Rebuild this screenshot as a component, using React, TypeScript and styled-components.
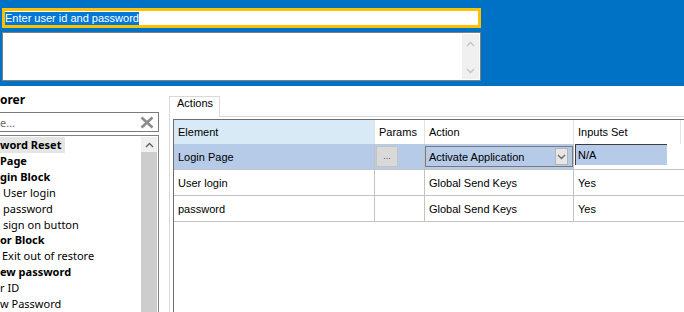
import React from 'react';
import styled, { createGlobalStyle } from 'styled-components';

//
// -- Global

const GlobalStyle = createGlobalStyle`
  html, body {
    margin: 0;
    padding: 0;
    background: #ffffff;
    overflow: hidden;
  }
  #root {
    width: 684px;
    height: 312px;
  }
`;

const GRID_FONT = `'Liberation Sans', Arial, sans-serif`;
const TREE_FONT = `'Noto Sans', 'Open Sans', sans-serif`;
const ROW_SELECTED = '#b5cbe7';

//
// -- Styled Components

const Window = styled.div`
  width: 684px;
  height: 312px;
  display: flex;
  flex-direction: column;
  overflow: hidden;
`;

const Banner = styled.div`
  height: 86px;
  flex-shrink: 0;
  box-sizing: border-box;
  background: #0072c6;
  padding: 8px 0 0 2px;
  display: flex;
  flex-direction: column;
  gap: 4px;
`;

const PromptBox = styled.div`
  width: 479px;
  height: 20px;
  box-sizing: border-box;
  border: 3px solid #ffc000;
  background: #ffffff;
  display: flex;
  align-items: center;
  font: 11px ${GRID_FONT};
`;

const SelectedText = styled.span`
  background: #0078d7;
  color: #ffffff;
  line-height: 13px;
`;

const NotesBox = styled.div`
  width: 479px;
  height: 49px;
  box-sizing: border-box;
  border: 1px solid #7f7f7f;
  background: #ffffff;
  padding: 1px;
  display: flex;
  justify-content: flex-end;
`;

const NotesScroll = styled.div`
  width: 17px;
  background: #f0f0f0;
  display: flex;
  flex-direction: column;
  justify-content: space-between;
  align-items: center;
  padding: 7px 0 5px;
  box-sizing: border-box;
`;

const Body = styled.div`
  flex: 1;
  display: flex;
  min-height: 0;
`;

const LeftPane = styled.div`
  width: 159px;
  flex-shrink: 0;
  display: flex;
  flex-direction: column;
`;

const PaneTitle = styled.div`
  height: 26px;
  display: flex;
  align-items: center;
  font: 700 12px ${TREE_FONT};
  color: #000000;
`;

const SearchBox = styled.div`
  height: 20px;
  box-sizing: border-box;
  border: 1px solid #7a7a7a;
  border-left: none;
  display: flex;
  align-items: center;
  justify-content: space-between;
  padding-right: 4px;
  font: 11px ${TREE_FONT};
  color: #6d6d6d;
`;

const TreeBox = styled.div`
  flex: 1;
  margin-top: 3px;
  border: 1px solid #828282;
  border-left: none;
  border-bottom: none;
  padding-right: 1px;
  display: flex;
  min-height: 0;
`;

const TreeList = styled.div`
  flex: 1;
  padding-top: 1px;
  display: flex;
  flex-direction: column;
`;

const TreeRow = styled.div<{ $bold?: boolean; $indent?: number; $selected?: boolean }>`
  height: 16px;
  line-height: 16px;
  width: fit-content;
  padding: 0 4px 0 ${(p) => p.$indent || 0}px;
  font: ${(p) => (p.$bold ? 700 : 400)} 11px ${TREE_FONT};
  color: #000000;
  white-space: nowrap;
  background: ${(p) => (p.$selected ? '#e5e5e5' : 'transparent')};
`;

const TreeScroll = styled.div`
  width: 16px;
  margin-top: 1px;
  display: flex;
  flex-direction: column;
`;

const ScrollArrow = styled.div`
  height: 15px;
  background: #f0f0f0;
  display: flex;
  align-items: center;
  justify-content: center;
`;

const ScrollThumb = styled.div`
  flex: 1;
  background: #cdcdcd;
`;

const RightPane = styled.div`
  flex: 1;
  padding: 10px 0 0 10px;
  display: flex;
  flex-direction: column;
  min-width: 0;
`;

const TabStrip = styled.div`
  display: flex;
`;

const Tab = styled.div`
  position: relative;
  z-index: 1;
  width: 51px;
  height: 21px;
  box-sizing: border-box;
  margin-bottom: -1px;
  border: 1px solid #d9d9d9;
  border-bottom: none;
  background: #ffffff;
  padding-left: 7px;
  line-height: 19px;
  font: 11px ${GRID_FONT};
`;

const TabPage = styled.div`
  flex: 1;
  border-top: 1px solid #d9d9d9;
  border-left: 1px solid #d9d9d9;
  padding: 2px 0 0 3px;
  display: flex;
  flex-direction: column;
`;

const Grid = styled.div`
  flex: 1;
  border-top: 1px solid #6d6d6d;
  border-left: 1px solid #6d6d6d;
  background: #ffffff;
  font: 11px ${GRID_FONT};
  color: #000000;
`;

const GridRow = styled.div<{ $header?: boolean }>`
  display: grid;
  grid-template-columns: 201px 50px 149px 107px 1fr;
  height: ${(p) => (p.$header ? '24px' : '26px')};
  box-sizing: border-box;
  border-bottom: ${(p) => (p.$header ? 'none' : '1px solid #c3c3c3')};
`;

const Cell = styled.div<{ $header?: boolean; $bg?: string; $open?: boolean }>`
  display: flex;
  align-items: center;
  box-sizing: border-box;
  padding-left: 4px;
  white-space: nowrap;
  overflow: hidden;
  background: ${(p) => p.$bg || 'transparent'};
  border-right: ${(p) =>
    p.$open ? 'none' : p.$header ? '1px solid #e3e3e3' : '1px solid #c3c3c3'};
`;

const EllipsisButton = styled.div`
  width: 22px;
  height: 21px;
  box-sizing: border-box;
  margin-left: -3px;
  border: 1px solid #c4c4c4;
  background: #d9d9d9;
  color: #555555;
  font-size: 9px;
  display: flex;
  align-items: flex-end;
  justify-content: center;
  padding-bottom: 5px;
`;

const Combo = styled.div`
  width: 148px;
  height: 21px;
  box-sizing: border-box;
  margin-left: -4px;
  border: 1px solid #7a7a7a;
  background: ${ROW_SELECTED};
  display: flex;
  align-items: center;
  justify-content: space-between;
  padding: 0 4px 0 3px;
`;

const ComboButton = styled.div`
  width: 13px;
  height: 17px;
  box-sizing: border-box;
  border: 1px solid #b4b4b4;
  background: #e6e6e6;
  display: flex;
  align-items: center;
  justify-content: center;
`;

const EditBox = styled.div`
  width: 92px;
  height: 21px;
  box-sizing: border-box;
  margin: -4px 0 0 -3px;
  border-top: 1px solid #3c3c3c;
  border-left: 1px solid #3c3c3c;
  background: ${ROW_SELECTED};
  display: flex;
  align-items: center;
  padding-left: 2px;
`;

//
// -- Icons

const Chevron: React.FC<{ up?: boolean; color: string }> = ({ up, color }) => (
  <svg width="9" height="6" viewBox="0 0 9 6">
    <path
      d={up ? 'M1 5 L4.5 1.5 L8 5' : 'M1 1 L4.5 4.5 L8 1'}
      fill="none"
      stroke={color}
      strokeWidth="1.4"
    />
  </svg>
);

const ClearIcon = () => (
  <svg width="14" height="13" viewBox="0 0 14 13">
    <path d="M1.5 1.5 L12.5 11.5 M12.5 1.5 L1.5 11.5" stroke="#8c8c8c" strokeWidth="2.6" />
  </svg>
);

//
// -- Data

const treeItems = [
  { label: 'word Reset', bold: true, selected: true },
  { label: 'Page', bold: true },
  { label: 'gin Block', bold: true },
  { label: 'User login', indent: 3 },
  { label: 'password', indent: 3 },
  { label: 'sign on button', indent: 3 },
  { label: 'or Block', bold: true },
  { label: 'Exit out of restore', indent: 2 },
  { label: 'ew password', bold: true },
  { label: 'r ID' },
  { label: 'w Password' },
];

const actions = [
  { element: 'User login', action: 'Global Send Keys', inputs: 'Yes' },
  { element: 'password', action: 'Global Send Keys', inputs: 'Yes' },
];

//
// -- App

const App: React.FunctionComponent = () => {
  return (
    <>
      <GlobalStyle />
      <Window>
        <Banner>
          <PromptBox>
            <SelectedText>Enter user id and password</SelectedText>
          </PromptBox>
          <NotesBox>
            <NotesScroll>
              <Chevron up color="#c4c4c4" />
              <Chevron color="#c4c4c4" />
            </NotesScroll>
          </NotesBox>
        </Banner>

        <Body>
          <LeftPane>
            <PaneTitle>orer</PaneTitle>
            <SearchBox>
              <span>e...</span>
              <ClearIcon />
            </SearchBox>
            <TreeBox>
              <TreeList>
                {treeItems.map((item) => (
                  <TreeRow
                    key={item.label}
                    $bold={item.bold}
                    $indent={item.indent}
                    $selected={item.selected}
                  >
                    {item.label}
                  </TreeRow>
                ))}
              </TreeList>
              <TreeScroll>
                <ScrollArrow>
                  <Chevron up color="#606060" />
                </ScrollArrow>
                <ScrollThumb />
              </TreeScroll>
            </TreeBox>
          </LeftPane>

          <RightPane>
            <TabStrip>
              <Tab>Actions</Tab>
            </TabStrip>
            <TabPage>
              <Grid>
                <GridRow $header>
                  <Cell $header $bg="#d9eaf7">Element</Cell>
                  <Cell $header>Params</Cell>
                  <Cell $header>Action</Cell>
                  <Cell $header>Inputs Set</Cell>
                  <Cell $header $open />
                </GridRow>

                <GridRow>
                  <Cell $bg={ROW_SELECTED}>Login Page</Cell>
                  <Cell $bg={ROW_SELECTED}>
                    <EllipsisButton>...</EllipsisButton>
                  </Cell>
                  <Cell $bg={ROW_SELECTED}>
                    <Combo>
                      <span>Activate Application</span>
                      <ComboButton>
                        <Chevron color="#6a6a6a" />
                      </ComboButton>
                    </Combo>
                  </Cell>
                  <Cell $open>
                    <EditBox>N/A</EditBox>
                  </Cell>
                  <Cell $open />
                </GridRow>

                {actions.map((row) => (
                  <GridRow key={row.element}>
                    <Cell>{row.element}</Cell>
                    <Cell />
                    <Cell>{row.action}</Cell>
                    <Cell $open>{row.inputs}</Cell>
                    <Cell $open />
                  </GridRow>
                ))}
              </Grid>
            </TabPage>
          </RightPane>
        </Body>
      </Window>
    </>
  );
};

export default App;
